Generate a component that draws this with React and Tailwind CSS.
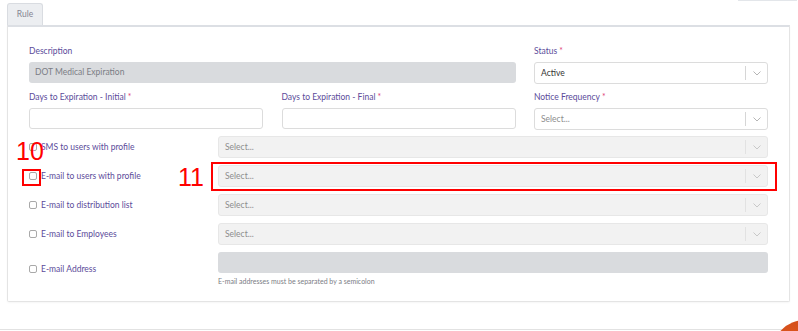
import React from "react";

const labelCls = "text-[8.5px] leading-[12px] text-[#5b4b9a]";
const Star = () => <span className="text-[#e0457b]"> *</span>;

function Chevron({ light }) {
  return (
    <div className="flex items-center h-full">
      <div className={`w-px h-[14px] ${light ? "bg-[#e2e2e2]" : "bg-[#d6d6d6]"}`} />
      <div className="w-[21px] flex justify-center">
        <svg width="8" height="5" viewBox="0 0 8 5" fill="none">
          <path d="M0.5 0.5 L4 4 L7.5 0.5" stroke={light ? "#c8c8c8" : "#b5b5b5"} strokeWidth="1" />
        </svg>
      </div>
    </div>
  );
}

function Select({ value, placeholder, disabled }) {
  return (
    <div
      className={`h-[22px] rounded-[3px] border flex items-center justify-between pl-[6px] ${
        disabled ? "bg-[#f2f2f2] border-[#e7e7e7]" : "bg-white border-[#dcdcdc]"
      }`}
    >
      <span className={`text-[8.5px] ${value ? "text-[#333]" : "text-[#8d8d8d]"}`}>
        {value || placeholder}
      </span>
      <Chevron light={disabled} />
    </div>
  );
}

function CheckRow({ label, children }) {
  return (
    <div className="flex items-center">
      <div className="w-[189px] flex items-center gap-[4px]">
        <div className="w-[8px] h-[8px] rounded-[2px] border border-[#a9a9a9] bg-white" />
        <span className="text-[8.5px] text-[#5b4b9a]">{label}</span>
      </div>
      <div className="flex-1">{children}</div>
    </div>
  );
}

export default function App() {
  return (
    <div
      className="relative w-[798px] h-[331px] bg-white overflow-hidden"
      style={{ fontFamily: "Lato, 'Open Sans', sans-serif" }}
    >
      <div className="flex justify-end">
        <div className="w-[59px] h-[1px] bg-[#e3e6ea] mr-[1px]" />
      </div>
      <div className="pl-[7px] pr-[8px] mt-[2px]">
        <div className="flex">
          <div className="w-[36px] h-[22px] bg-[#eceef1] border border-b-0 border-[#d9dce1] rounded-t-[3px] flex items-center justify-center text-[8.5px] text-[#858592]">
            Rule
          </div>
        </div>
        <div className="border border-[#e4e4e4] border-t-2 border-t-[#dcdfe4] rounded-b-[2px] shadow-[0_1px_2px_rgba(0,0,0,0.04)] pl-[21px] pr-[21px] pt-[18px] pb-[16px] h-[277px]">
          <div className="grid grid-cols-[234px_234px_234px] gap-x-[18.5px]">
            <div className="col-span-2 flex flex-col">
              <div className={labelCls}>Description</div>
              <div className="mt-[5px] h-[21px] rounded-[3px] bg-[#d9dbde] flex items-center pl-[6px] text-[8.5px] text-[#7b7d85]">
                DOT Medical Expiration
              </div>
            </div>
            <div className="flex flex-col">
              <div className={labelCls}>
                Status<Star />
              </div>
              <div className="mt-[5px]">
                <Select value="Active" />
              </div>
            </div>
            <div className="flex flex-col mt-[7px]">
              <div className={labelCls}>
                Days to Expiration - Initial<Star />
              </div>
              <div className="mt-[5px] h-[21px] rounded-[3px] border border-[#dcdcdc] bg-white" />
            </div>
            <div className="flex flex-col mt-[7px]">
              <div className={labelCls}>
                Days to Expiration - Final<Star />
              </div>
              <div className="mt-[5px] h-[21px] rounded-[3px] border border-[#dcdcdc] bg-white" />
            </div>
            <div className="flex flex-col mt-[7px]">
              <div className={labelCls}>
                Notice Frequency<Star />
              </div>
              <div className="mt-[5px]">
                <Select placeholder="Select..." />
              </div>
            </div>
          </div>

          <div className="flex flex-col gap-[7px] mt-[6px]">
            <CheckRow label="SMS to users with profile">
              <Select placeholder="Select..." disabled />
            </CheckRow>
            <CheckRow label="E-mail to users with profile">
              <Select placeholder="Select..." disabled />
            </CheckRow>
            <CheckRow label="E-mail to distribution list">
              <Select placeholder="Select..." disabled />
            </CheckRow>
            <CheckRow label="E-mail to Employees">
              <Select placeholder="Select..." disabled />
            </CheckRow>
            <CheckRow label="E-mail Address">
              <div className="h-[21px] rounded-[3px] bg-[#d9dbde]" />
              <div className="mt-[3px] text-[7px] leading-[10px] text-[#7b7d85]">
                E-mail addresses must be separated by a semicolon
              </div>
            </CheckRow>
          </div>
        </div>
      </div>

      <div className="absolute left-0 right-0 top-[329px] h-px bg-[#e2e2e2]" />

      {/* annotations */}
      <div
        className="absolute left-[16px] top-[136px] text-[25px] leading-[30px] text-[#ff0000]"
        style={{ fontFamily: "'Liberation Sans', Arial, sans-serif" }}
      >
        10
      </div>
      <div className="absolute left-[22px] top-[169px] w-[19px] h-[17px] border-2 border-[#ff0000]" />
      <div
        className="absolute left-[178px] top-[162px] text-[25px] leading-[30px] text-[#ff0000]"
        style={{ fontFamily: "'Liberation Sans', Arial, sans-serif" }}
      >
        11
      </div>
      <div className="absolute left-[211px] top-[162px] w-[566px] h-[29px] border-2 border-[#ff0000]" />

      <div className="absolute left-[772px] top-[320px] w-[66px] h-[66px] rounded-full bg-[radial-gradient(circle_at_30%_30%,#e0581f,#b5360f)]" />
    </div>
  );
}
